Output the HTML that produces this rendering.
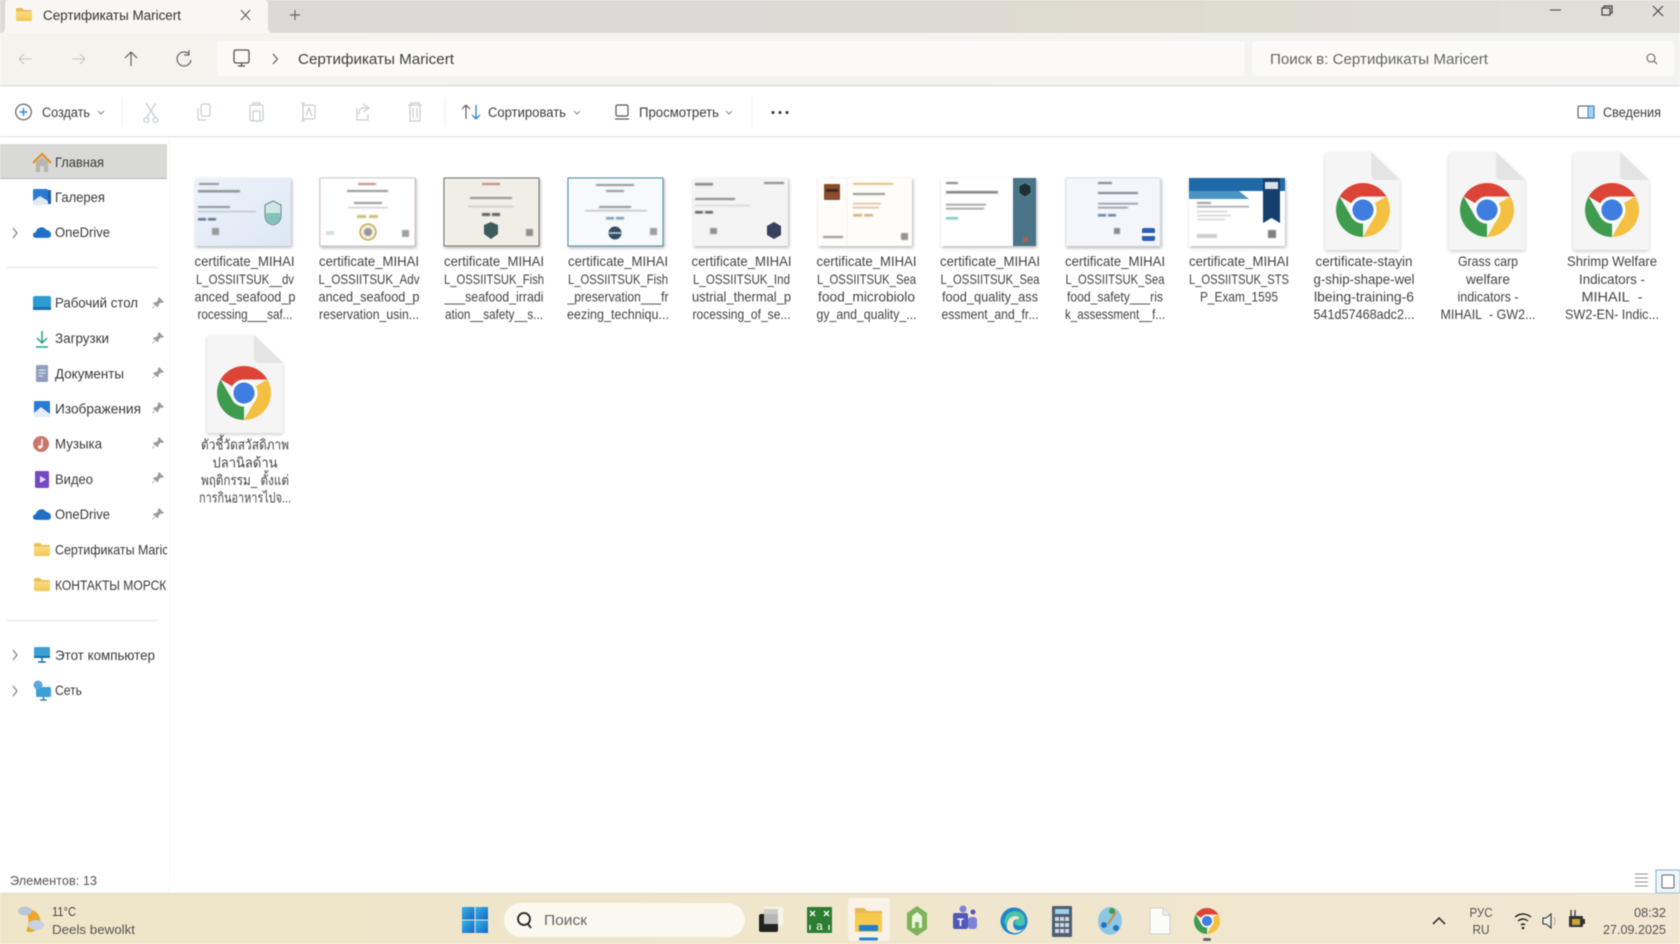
<!DOCTYPE html>
<html lang="ru"><head><meta charset="utf-8"><title>Сертификаты Maricert</title>
<style>
html,body{margin:0;padding:0;background:#fff;width:1680px;height:944px;overflow:hidden}
svg{display:block;filter:blur(.55px)}
svg svg{filter:none}
text{font-family:"Liberation Sans","Noto Sans CJK SC",sans-serif;fill:#3d3d3d;font-size:14px}
.n{font-size:14px;fill:#3a3a3a}
.f{font-size:14px;fill:#444;text-anchor:middle}
.t{font-size:13.5px;fill:#3c3c3c}
.s{font-size:13px;fill:#555}
</style></head><body>
<svg xmlns="http://www.w3.org/2000/svg" width="1680" height="944" viewBox="0 0 1680 944">
<defs>
<clipPath id="navclip"><rect x="0" y="535" width="167" height="70"/></clipPath>
<linearGradient id="tb" x1="0" x2="1"><stop offset="0" stop-color="#dddbd6"/><stop offset=".45" stop-color="#dcdad6"/><stop offset=".65" stop-color="#dfdbcf"/><stop offset="1" stop-color="#e1dfda"/></linearGradient>
<linearGradient id="ar" x1="0" x2="1"><stop offset="0" stop-color="#f5f3ee"/><stop offset="1" stop-color="#f3f3f1"/></linearGradient>
<linearGradient id="task" x1="0" x2="1"><stop offset="0" stop-color="#efe5c8"/><stop offset=".5" stop-color="#f0e6cc"/><stop offset="1" stop-color="#f2e7d2"/></linearGradient>
<linearGradient id="fold" x1="0" x2="0" y1="0" y2="1"><stop offset="0" stop-color="#f9dc86"/><stop offset="1" stop-color="#f4c64f"/></linearGradient>
<linearGradient id="win" x1="0" x2="1" y1="0" y2="1"><stop offset="0" stop-color="#36b3e8"/><stop offset="1" stop-color="#1667c4"/></linearGradient>
<linearGradient id="t1" x1="0" x2="1" y1="0" y2="1"><stop offset="0" stop-color="#eef3fb"/><stop offset="1" stop-color="#dde7f5"/></linearGradient>
<filter id="sh" x="-10%" y="-10%" width="125%" height="125%"><feDropShadow dx="1" dy="1.5" stdDeviation="1.5" flood-color="#000" flood-opacity=".3"/></filter>
<filter id="sh2" x="-10%" y="-10%" width="125%" height="125%"><feDropShadow dx="0" dy="1.5" stdDeviation="1.5" flood-color="#000" flood-opacity=".2"/></filter>
<filter id="bl"><feGaussianBlur stdDeviation=".6"/></filter>
<symbol id="chrome" viewBox="-28 -28 56 56" overflow="visible">
<path fill="#db4437" d="M0-27A27 27 0 0 1 23.4-13.5H0A13.5 13.5 0 0 0-11.7-6.75L-23.4-13.5A27 27 0 0 1 0-27Z"/>
<path fill="#f4c042" d="M0-27A27 27 0 0 1 23.4-13.5H0A13.5 13.5 0 0 0-11.7-6.75L-23.4-13.5A27 27 0 0 1 0-27Z" transform="rotate(120)"/>
<path fill="#3f9c4f" d="M0-27A27 27 0 0 1 23.4-13.5H0A13.5 13.5 0 0 0-11.7-6.75L-23.4-13.5A27 27 0 0 1 0-27Z" transform="rotate(240)"/>
<circle r="13.5" fill="#fff"/><circle r="10.6" fill="#3f7ee0"/>
</symbol>
<symbol id="fileic" viewBox="0 0 76 98" overflow="visible" preserveAspectRatio="none">
<path fill="#f5f5f5" d="M0 3Q0 0 3 0H47L76 28V95Q76 98 73 98H3Q0 98 0 95Z"/>
<path fill="#e4e4e4" d="M47 0V22Q47 28 53 28H76Z"/>
</symbol>
<symbol id="pin" viewBox="0 0 12 12" overflow="visible"><path fill="#9a9a9a" d="M7 0L12 5L10.6 5.8L8.6 5.6L6.5 7.7L6.4 9.6L5.4 10.4L3.5 8.3L.7 11.6L0 11L3 8.2L1 6.4L1.8 5.4L3.9 5.4L6 3.3L6 1.4Z"/></symbol>
<symbol id="cloud" viewBox="0 0 20 13" overflow="visible"><path fill="#1f6fc4" d="M4 13Q0 13 0 9.8Q0 7.3 3 6.8Q4 2.5 8 1.5Q12 .5 14.5 4Q20 5 20 9.5Q20 13 16 13Z"/></symbol>
<symbol id="folder" viewBox="0 0 16 13" overflow="visible"><path fill="#e9bd55" d="M0 1.5Q0 0 1.5 0H6L8 2H14.5Q16 2 16 3.5V5H0Z"/><path fill="url(#fold)" d="M0 3.5H16V11.5Q16 13 14.5 13H1.5Q0 13 0 11.5Z"/></symbol>
</defs>

<rect width="1680" height="944" fill="#fff"/>
<!-- title bar -->
<rect width="1680" height="33" fill="url(#tb)"/>
<path d="M0 33Q5 33 5 28V4Q5 0 9 0H264Q268 0 268 4V28Q268 33 273 33Z" fill="#f8f7f3"/>
<use href="#folder" x="16" y="8" width="16" height="13"/>
<text x="43" y="20" textLength="138" lengthAdjust="spacingAndGlyphs" class="t" style="fill:#333">Сертификаты Maricert</text>
<path d="M241 10L250 20M250 10L241 20" stroke="#555" stroke-width="1" fill="none"/>
<path d="M295 10V20M290 15H300" stroke="#666" stroke-width="1.2" fill="none"/>
<path d="M1550 10H1561" stroke="#555" stroke-width="1.2"/>
<path d="M1602 8H1610V15H1602ZM1604 8V6H1612V13H1610" stroke="#444" stroke-width="1.2" fill="none"/>
<path d="M1653 6L1663 16M1663 6L1653 16" stroke="#444" stroke-width="1.1" fill="none"/>

<!-- address row -->
<rect y="33" width="1680" height="53" fill="url(#ar)"/>
<rect y="85" width="1680" height="1.2" fill="#d8d8d6"/>
<path d="M19 59H32M19 59L24 54M19 59L24 64" stroke="#c4c4c2" fill="none" stroke-width="1.1"/>
<path d="M72 59H85M85 59L80 54M85 59L80 64" stroke="#c4c4c2" fill="none" stroke-width="1.1"/>
<path d="M131 66V52M131 52L125 58M131 52L137 58" stroke="#555" fill="none" stroke-width="1.1"/>
<path d="M189 54A7 7 0 1 0 191 60M189 50V55H184" stroke="#666" fill="none" stroke-width="1.2"/>
<rect x="217" y="41" width="1028" height="35" rx="3" fill="#fbfaf8"/>
<rect x="1252" y="41" width="422" height="35" rx="3" fill="#fbfaf8"/>
<path d="M234 52Q234 50 236 50H247Q249 50 249 52V61Q249 63 247 63H236Q234 63 234 61ZM238 66H245M241.500 63V66" stroke="#555" fill="none" stroke-width="1.3"/>
<path d="M273 54L277.500 59L273 64" stroke="#555" fill="none" stroke-width="1.1"/>
<text x="298" y="64" textLength="156" lengthAdjust="spacingAndGlyphs" style="font-size:15px;fill:#3f3f3f">Сертификаты Maricert</text>
<text x="1270" y="64" textLength="218" lengthAdjust="spacingAndGlyphs" style="font-size:15px;fill:#666">Поиск в: Сертификаты Maricert</text>
<circle cx="1651" cy="58" r="4" stroke="#666" fill="none" stroke-width="1.1"/><path d="M1654 61L1657 64" stroke="#666" stroke-width="1.1"/>

<!-- toolbar -->
<rect y="136" width="1680" height="1.2" fill="#e2e2e2"/>
<circle cx="23.500" cy="112" r="7.800" fill="none" stroke="#555" stroke-width="1.1"/><path d="M23.500 108V116M19.500 112H27.500" stroke="#1a73c8" stroke-width="1.2"/>
<text x="42" y="117" textLength="48" lengthAdjust="spacingAndGlyphs" class="t">Создать</text>
<path d="M98 111L101 114L104 111" stroke="#888" fill="none"/>
<path d="M122 97V127M445 97V127M752 97V127" stroke="#f0f0f0"/>
<g stroke="#c5ced6" fill="none" stroke-width="1.2">
<path d="M146 103L155 117M156 103L147 117"/><circle cx="146.500" cy="120" r="2.500"/><circle cx="155.500" cy="120" r="2.500"/>
<rect x="201" y="104" width="9" height="12" rx="2"/><path d="M198 108V118Q198 120 200 120H206"/>
<rect x="250" y="105" width="13" height="16" rx="2"/><rect x="253" y="111" width="7" height="10" rx="1"/><path d="M253 105V103H260V105"/>
<rect x="303" y="105" width="12" height="14" rx="2"/><path d="M306 116L309 108L312 116M301 103H305M303 103V121M301 121H305"/>
<path d="M357 108V120H368V114M363 104L369 108L363 112M369 108H363Q359 108 359 114"/>
<path d="M408 105H422M411 105V103H419V105M410 105V121H420V105M413 108V118M417 108V118"/>
</g>
<path d="M466 119V105M466 105L462 109M466 105L470 109" stroke="#555" fill="none" stroke-width="1.1"/>
<path d="M476 105V119M476 119L472 115M476 119L480 115" stroke="#1a73c8" fill="none" stroke-width="1.2"/>
<text x="488" y="117" textLength="78" lengthAdjust="spacingAndGlyphs" class="t">Сортировать</text>
<path d="M574 111L577 114L580 111" stroke="#888" fill="none"/>
<rect x="616" y="105" width="12" height="11" rx="1.500" stroke="#555" fill="none" stroke-width="1.2"/><path d="M615 119H629" stroke="#555" stroke-width="1.2"/>
<text x="639" y="117" textLength="80" lengthAdjust="spacingAndGlyphs" class="t">Просмотреть</text>
<path d="M726 111L729 114L732 111" stroke="#888" fill="none"/>
<circle cx="773" cy="112.500" r="1.500" fill="#333"/><circle cx="780" cy="112.500" r="1.500" fill="#333"/><circle cx="787" cy="112.500" r="1.500" fill="#333"/>
<rect x="1578" y="106" width="16" height="12" rx="1.500" stroke="#555" fill="none" stroke-width="1.1"/><rect x="1588" y="106" width="6" height="12" fill="#a9d0ee" stroke="#1a73c8" stroke-width=".8"/>
<text x="1603" y="117" textLength="58" lengthAdjust="spacingAndGlyphs" class="t">Сведения</text>

<!-- sidebar -->
<rect x="169" y="137" width="1" height="757" fill="#f5f5f5"/>
<rect x="0" y="144" width="167" height="35" fill="#d9d9d8"/>
<rect x="0" y="178" width="167" height="1" fill="#b5b5b5"/>
<path d="M36 172V162L42 157L48 162V172H44V166H40V172Z" fill="#b8b5ae"/><path d="M33 163L42 154L51 163" stroke="#e08c2a" stroke-width="2.200" fill="none"/>
<text class="n" x="55" y="167" textLength="49" lengthAdjust="spacingAndGlyphs">Главная</text>
<rect x="33" y="189" width="15" height="16" rx="1.500" fill="#2a7bd2"/><rect x="48" y="190" width="3" height="14" fill="#1e5fa8"/><path d="M33 205V201L40 196L48 201V205Z" fill="#dfeaf5"/>
<text class="n" x="55" y="202" textLength="50" lengthAdjust="spacingAndGlyphs">Галерея</text>
<path d="M13 228L17 233L13 238" stroke="#777" fill="none" stroke-width="1.1"/>
<use href="#cloud" x="33" y="226" width="18" height="12"/>
<text class="n" x="55" y="237" textLength="55" lengthAdjust="spacingAndGlyphs">OneDrive</text>
<rect x="7" y="267" width="151" height="1" fill="#e4e4e4"/>

<rect x="33" y="296" width="18" height="14" rx="2" fill="#2f9ad0"/><rect x="33" y="307" width="18" height="3" fill="#1b6ea8"/>
<text class="n" x="55" y="307.500" textLength="83" lengthAdjust="spacingAndGlyphs">Рабочий стол</text>
<use href="#pin" x="152" y="297" width="12" height="12"/>
<path d="M42 331V343M37 338L42 343L47 338M36 347H48" stroke="#27a184" stroke-width="1.500" fill="none"/>
<text class="n" x="55" y="343" textLength="54" lengthAdjust="spacingAndGlyphs">Загрузки</text>
<use href="#pin" x="152" y="332" width="12" height="12"/>
<rect x="36" y="365" width="12" height="17" rx="1" fill="#8ea0bd"/><path d="M38.500 370H45.500M38.500 373H45.500M38.500 376H43" stroke="#e8edf4"/>
<text class="n" x="55" y="378.500" textLength="69" lengthAdjust="spacingAndGlyphs">Документы</text>
<use href="#pin" x="152" y="367" width="12" height="12"/>
<rect x="34" y="401" width="16" height="16" rx="1.500" fill="#2a7bd2"/><path d="M34 417V413L41 407L50 414V417Z" fill="#e6eef7"/>
<text class="n" x="55" y="413.500" textLength="86" lengthAdjust="spacingAndGlyphs">Изображения</text>
<use href="#pin" x="152" y="402" width="12" height="12"/>
<circle cx="41" cy="444" r="8" fill="#c9776a"/><path d="M42 439V447" stroke="#fff" stroke-width="1.400"/><circle cx="40" cy="447" r="1.800" fill="#fff"/>
<text class="n" x="55" y="448.500" textLength="47" lengthAdjust="spacingAndGlyphs">Музыка</text>
<use href="#pin" x="152" y="437" width="12" height="12"/>
<rect x="35" y="471" width="14" height="17" rx="1.500" fill="#7549c4"/><path d="M40 476L46 479.500L40 483Z" fill="#e9e0fa"/>
<text class="n" x="55" y="484" textLength="38" lengthAdjust="spacingAndGlyphs">Видео</text>
<use href="#pin" x="152" y="472" width="12" height="12"/>
<use href="#cloud" x="33" y="508" width="18" height="12"/>
<text class="n" x="55" y="519" textLength="55" lengthAdjust="spacingAndGlyphs">OneDrive</text>
<use href="#pin" x="152" y="508" width="12" height="12"/>
<use href="#folder" x="34" y="543" width="16" height="13"/>
<g clip-path="url(#navclip)">
<text class="n" x="55" y="554.500" textLength="128" lengthAdjust="spacingAndGlyphs">Сертификаты Maricert</text>
<text class="n" x="55" y="590" textLength="128" lengthAdjust="spacingAndGlyphs">КОНТАКТЫ МОРСКИЕ</text>
</g>
<use href="#folder" x="34" y="578" width="16" height="13"/>
<rect x="7" y="620" width="151" height="1" fill="#e4e4e4"/>
<path d="M13 650L17 655L13 660" stroke="#777" fill="none" stroke-width="1.1"/>
<rect x="34" y="647" width="16" height="11" rx="1.500" fill="#3b9fd6"/><rect x="34" y="656" width="16" height="2" fill="#1e6ea6"/><path d="M38 662H46M42 658V662" stroke="#2a6f9c" stroke-width="1.500"/>
<text class="n" x="55" y="660" textLength="100" lengthAdjust="spacingAndGlyphs">Этот компьютер</text>
<path d="M13 686L17 691L13 696" stroke="#777" fill="none" stroke-width="1.1"/>
<rect x="36" y="687" width="15" height="10" rx="1.500" fill="#3b9fd6"/><path d="M40 700H47M43.500 697V700" stroke="#2a6f9c" stroke-width="1.300"/><circle cx="38" cy="685" r="4.500" fill="#5aa8d8"/>
<text class="n" x="55" y="695" textLength="27" lengthAdjust="spacingAndGlyphs">Сеть</text>

<!-- thumbnails -->
<g transform="translate(195 178)">
<rect width="96" height="68" fill="url(#t1)" filter="url(#sh)"/>
<g filter="url(#bl)" fill="#667" opacity=".7">
<rect x="4" y="5" width="20" height="2"/><rect x="3" y="12" width="42" height="2.500"/><rect x="3" y="28" width="32" height="2"/><rect x="3" y="33" width="58" height="1.200" fill="#9aa"/>
<rect x="3" y="40" width="8" height="2.500" fill="#1f3a5c"/><rect x="13" y="40" width="8" height="2.500" fill="#1f3a5c"/><rect x="17" y="50" width="7" height="7" fill="#777"/></g>
<path d="M70 27L78 23L86 27V37Q86 45 78 47Q70 45 70 37Z" fill="#cfe8e4" stroke="#6e8c94" stroke-width="1.100"/><path d="M71 35H85V38Q85 44 78 46Q71 44 71 38Z" fill="#7fc3bb"/>
</g>
<g transform="translate(320 178)">
<rect width="95" height="68" fill="#fff" stroke="#c8bcb5" stroke-width=".8" filter="url(#sh)"/>
<g filter="url(#bl)" fill="#666" opacity=".7">
<rect x="38" y="5" width="18" height="2" fill="#a54"/><rect x="27" y="12" width="41" height="2"/><rect x="34" y="24" width="28" height="2"/><rect x="28" y="29" width="40" height="1.200" fill="#aaa"/>
<rect x="37" y="37" width="9" height="3" fill="#b8a13c"/><rect x="49" y="37" width="9" height="3" fill="#b8a13c"/><rect x="82" y="52" width="7" height="7" fill="#777"/><rect x="6" y="53" width="8" height="4" fill="#ccc"/></g>
<circle cx="48" cy="54" r="8" fill="#eeeadb" stroke="#b8a13c" stroke-width="1.300"/><circle cx="48" cy="54" r="4" fill="#999"/>
</g>
<g transform="translate(444 178)">
<rect width="95" height="68" fill="#f1eee8" stroke="#666" stroke-width=".9" filter="url(#sh)"/>
<g filter="url(#bl)" fill="#666" opacity=".7">
<rect x="38" y="5" width="18" height="2" fill="#a54"/><rect x="26" y="19" width="42" height="2"/><rect x="24" y="28" width="46" height="1.200" fill="#aaa"/>
<rect x="38" y="35" width="8" height="3" fill="#222"/><rect x="48" y="35" width="8" height="3" fill="#222"/><rect x="82" y="51" width="7" height="7" fill="#666"/></g>
<path d="M40 47L47 44L54 47V56L47 61L40 56Z" fill="#3d5d5d"/>
</g>
<g transform="translate(568 178)">
<rect width="95" height="68" fill="#f7f9fa" stroke="#4d8da2" stroke-width="1" filter="url(#sh)"/>
<g filter="url(#bl)" fill="#667" opacity=".7">
<rect x="28" y="6" width="38" height="2"/><rect x="38" y="12" width="18" height="2"/><rect x="31" y="28" width="32" height="2"/><rect x="17" y="32" width="62" height="1.200" fill="#999"/>
<rect x="38" y="39" width="8" height="2.500" fill="#3d7d92"/><rect x="48" y="39" width="8" height="2.500" fill="#3d7d92"/><rect x="82" y="50" width="7" height="7" fill="#777"/></g>
<circle cx="47" cy="55" r="6.500" fill="#334e66"/><rect x="41" y="54" width="12" height="2" fill="#9dbbc8"/>
</g>
<g transform="translate(693 178)">
<rect width="95" height="68" fill="#f3f4f3" filter="url(#sh)"/>
<g filter="url(#bl)" fill="#555" opacity=".7">
<rect x="2" y="5" width="18" height="2.500"/><rect x="71" y="4" width="20" height="2"/><rect x="2" y="20" width="40" height="2"/><rect x="2" y="27" width="55" height="1.200" fill="#bbb"/>
<rect x="2" y="33" width="8" height="2.500" fill="#222"/><rect x="12" y="33" width="8" height="2.500" fill="#222"/><rect x="17" y="50" width="7" height="6" fill="#666"/></g>
<path d="M74 48L81 44L88 48V57L81 61L74 57Z" fill="#37415f"/>
</g>
<g transform="translate(818 178)">
<rect width="94" height="68" fill="#fffdf9" filter="url(#sh)"/>
<rect x="6" y="6" width="16" height="16" rx="1" fill="#8a4c2b"/><rect x="8" y="11" width="12" height="3" fill="#3f2a1e"/>
<path d="M29 0V68" stroke="#f3f0ea"/>
<g filter="url(#bl)" fill="#666" opacity=".7">
<rect x="35" y="5" width="40" height="1.800" fill="#d8943a"/><rect x="35" y="15" width="32" height="2"/><rect x="35" y="25" width="28" height="1.200" fill="#c08040"/><rect x="35" y="29" width="26" height="1.200" fill="#c08040"/>
<rect x="35" y="36" width="9" height="2.500" fill="#d08a3a"/><rect x="46" y="36" width="9" height="2.500" fill="#d08a3a"/><rect x="5" y="58" width="20" height="2"/><rect x="83" y="55" width="7" height="7" fill="#666"/></g>
</g>
<g transform="translate(941 178)">
<rect width="95" height="68" fill="#fff" filter="url(#sh)"/>
<rect x="72" y="0" width="23" height="68" fill="#4a7488"/>
<path d="M78 8L84 5L90 8V15L84 19L78 15Z" fill="#222d36" stroke="#6fb" stroke-width=".3"/>
<g filter="url(#bl)" fill="#555" opacity=".75">
<rect x="5" y="4" width="12" height="2"/><rect x="5" y="13" width="52" height="2.500"/><rect x="5" y="26" width="40" height="1.300"/><rect x="5" y="30" width="38" height="1.300"/><rect x="5" y="39" width="12" height="2.500" fill="#4fb3a8"/></g>
<rect x="82" y="59" width="5" height="5" fill="#b06050"/>
</g>
<g transform="translate(1066 178)">
<rect width="94" height="68" fill="#f4f6fb" stroke="#dde2ee" filter="url(#sh)"/>
<g filter="url(#bl)" fill="#556" opacity=".75">
<rect x="32" y="4" width="14" height="2"/><rect x="32" y="14" width="40" height="2"/><rect x="32" y="25" width="40" height="1.300"/><rect x="32" y="29" width="30" height="1.300"/>
<rect x="32" y="36" width="8" height="2.500" fill="#33569a"/><rect x="42" y="36" width="8" height="2.500" fill="#33569a"/><rect x="48" y="50" width="6" height="6" fill="#666"/></g>
<rect x="76" y="50" width="13" height="13" rx="2" fill="#2f5db5"/><rect x="76" y="55" width="13" height="3" fill="#fff"/>
</g>
<g transform="translate(1189 178)">
<rect width="96" height="68" fill="#fff" filter="url(#sh)"/>
<rect width="96" height="13" fill="#1e6aa8"/><path d="M0 13H50L60 21H0Z" fill="#4a94c4"/>
<path d="M74 0H91V45L82.500 40L74 45Z" fill="#173f6e"/><rect x="76" y="4" width="13" height="7" fill="#fff" opacity=".85"/>
<g filter="url(#bl)" fill="#667" opacity=".75"><rect x="8" y="24" width="14" height="1.800"/><rect x="8" y="28" width="52" height="1.300"/><rect x="8" y="33" width="30" height="1.100" fill="#aaa"/><rect x="8" y="37" width="34" height="1.100" fill="#aaa"/><rect x="8" y="41" width="28" height="1.100" fill="#aaa"/><rect x="79" y="52" width="8" height="8" fill="#555"/><rect x="8" y="56" width="20" height="4" fill="#bbb"/></g>
</g>

<!-- chrome files -->
<g filter="url(#sh2)"><use href="#fileic" x="1325" y="152" width="75" height="98"/><use href="#fileic" x="1449" y="152" width="76" height="98"/><use href="#fileic" x="1573" y="152" width="76" height="98"/><use href="#fileic" x="207" y="335" width="76" height="98"/></g>
<use href="#chrome" x="1335" y="182" width="56" height="56"/>
<use href="#chrome" x="1459" y="182" width="56" height="56"/>
<use href="#chrome" x="1584" y="182" width="56" height="56"/>
<use href="#chrome" x="216" y="365" width="56" height="56"/>

<!-- labels -->
<g>
<text class="f" x="244.500" y="266" textLength="100" lengthAdjust="spacingAndGlyphs">certificate_MIHAI</text>
<text class="f" x="245" y="284" textLength="98" lengthAdjust="spacingAndGlyphs">L_OSSIITSUK__dv</text>
<text class="f" x="245" y="301.500" textLength="101" lengthAdjust="spacingAndGlyphs">anced_seafood_p</text>
<text class="f" x="245" y="319" textLength="95" lengthAdjust="spacingAndGlyphs">rocessing___saf...</text>
<text class="f" x="369" y="266" textLength="100" lengthAdjust="spacingAndGlyphs">certificate_MIHAI</text>
<text class="f" x="369" y="284" textLength="101" lengthAdjust="spacingAndGlyphs">L_OSSIITSUK_Adv</text>
<text class="f" x="369" y="301.500" textLength="101" lengthAdjust="spacingAndGlyphs">anced_seafood_p</text>
<text class="f" x="369" y="319" textLength="100" lengthAdjust="spacingAndGlyphs">reservation_usin...</text>
<text class="f" x="494" y="266" textLength="100" lengthAdjust="spacingAndGlyphs">certificate_MIHAI</text>
<text class="f" x="494" y="284" textLength="100" lengthAdjust="spacingAndGlyphs">L_OSSIITSUK_Fish</text>
<text class="f" x="494" y="301.500" textLength="99" lengthAdjust="spacingAndGlyphs">___seafood_irradi</text>
<text class="f" x="494" y="319" textLength="98" lengthAdjust="spacingAndGlyphs">ation__safety__s...</text>
<text class="f" x="618" y="266" textLength="100" lengthAdjust="spacingAndGlyphs">certificate_MIHAI</text>
<text class="f" x="618" y="284" textLength="100" lengthAdjust="spacingAndGlyphs">L_OSSIITSUK_Fish</text>
<text class="f" x="618" y="301.500" textLength="101" lengthAdjust="spacingAndGlyphs">_preservation___fr</text>
<text class="f" x="618" y="319" textLength="102" lengthAdjust="spacingAndGlyphs">eezing_techniqu...</text>
<text class="f" x="741.500" y="266" textLength="100" lengthAdjust="spacingAndGlyphs">certificate_MIHAI</text>
<text class="f" x="741.500" y="284" textLength="97" lengthAdjust="spacingAndGlyphs">L_OSSIITSUK_Ind</text>
<text class="f" x="741.500" y="301.500" textLength="99" lengthAdjust="spacingAndGlyphs">ustrial_thermal_p</text>
<text class="f" x="741.500" y="319" textLength="98" lengthAdjust="spacingAndGlyphs">rocessing_of_se...</text>
<text class="f" x="866.500" y="266" textLength="100" lengthAdjust="spacingAndGlyphs">certificate_MIHAI</text>
<text class="f" x="866.500" y="284" textLength="99" lengthAdjust="spacingAndGlyphs">L_OSSIITSUK_Sea</text>
<text class="f" x="866.500" y="301.500" textLength="97" lengthAdjust="spacingAndGlyphs">food_microbiolo</text>
<text class="f" x="866.500" y="319" textLength="100" lengthAdjust="spacingAndGlyphs">gy_and_quality_...</text>
<text class="f" x="990" y="266" textLength="100" lengthAdjust="spacingAndGlyphs">certificate_MIHAI</text>
<text class="f" x="990" y="284" textLength="99" lengthAdjust="spacingAndGlyphs">L_OSSIITSUK_Sea</text>
<text class="f" x="990" y="301.500" textLength="96" lengthAdjust="spacingAndGlyphs">food_quality_ass</text>
<text class="f" x="990" y="319" textLength="97" lengthAdjust="spacingAndGlyphs">essment_and_fr...</text>
<text class="f" x="1115" y="266" textLength="100" lengthAdjust="spacingAndGlyphs">certificate_MIHAI</text>
<text class="f" x="1115" y="284" textLength="99" lengthAdjust="spacingAndGlyphs">L_OSSIITSUK_Sea</text>
<text class="f" x="1115" y="301.500" textLength="96" lengthAdjust="spacingAndGlyphs">food_safety___ris</text>
<text class="f" x="1115" y="319" textLength="100" lengthAdjust="spacingAndGlyphs">k_assessment__f...</text>
<text class="f" x="1239" y="266" textLength="100" lengthAdjust="spacingAndGlyphs">certificate_MIHAI</text>
<text class="f" x="1239" y="284" textLength="100" lengthAdjust="spacingAndGlyphs">L_OSSIITSUK_STS</text>
<text class="f" x="1239" y="301.500" textLength="78" lengthAdjust="spacingAndGlyphs">P_Exam_1595</text>
<text class="f" x="1364" y="266" textLength="97" lengthAdjust="spacingAndGlyphs">certificate-stayin</text>
<text class="f" x="1364" y="284" textLength="101" lengthAdjust="spacingAndGlyphs">g-ship-shape-wel</text>
<text class="f" x="1364" y="301.500" textLength="100" lengthAdjust="spacingAndGlyphs">lbeing-training-6</text>
<text class="f" x="1364" y="319" textLength="101" lengthAdjust="spacingAndGlyphs">541d57468adc2...</text>
<text class="f" x="1488" y="266" textLength="60" lengthAdjust="spacingAndGlyphs">Grass carp</text>
<text class="f" x="1488" y="284" textLength="44" lengthAdjust="spacingAndGlyphs">welfare</text>
<text class="f" x="1488" y="301.500" textLength="61" lengthAdjust="spacingAndGlyphs">indicators -</text>
<text class="f" x="1488" y="319" textLength="95" lengthAdjust="spacingAndGlyphs">MIHAIL&#160;&#160;- GW2...</text>
<text class="f" x="1612" y="266" textLength="90" lengthAdjust="spacingAndGlyphs">Shrimp Welfare</text>
<text class="f" x="1612" y="284" textLength="66" lengthAdjust="spacingAndGlyphs">Indicators -</text>
<text class="f" x="1612" y="301.500" textLength="61" lengthAdjust="spacingAndGlyphs">MIHAIL&#160;&#160;-</text>
<text class="f" x="1612" y="319" textLength="94" lengthAdjust="spacingAndGlyphs">SW2-EN- Indic...</text>
<text class="f" x="245" y="449.500" textLength="88" lengthAdjust="spacingAndGlyphs">ตัวชี้วัดสวัสดิภาพ</text>
<text class="f" x="245" y="467.500" textLength="65" lengthAdjust="spacingAndGlyphs">ปลานิลด้าน</text>
<text class="f" x="245" y="485" textLength="88" lengthAdjust="spacingAndGlyphs">พฤติกรรม_ ตั้งแต่</text>
<text class="f" x="245" y="502.500" textLength="92" lengthAdjust="spacingAndGlyphs">การกินอาหารไปจ...</text>
</g>

<!-- status bar -->
<text x="10" y="885" textLength="87" lengthAdjust="spacingAndGlyphs" class="s">Элементов: 13</text>
<path d="M1635 874H1648M1635 878H1648M1635 882H1648M1635 886H1648" stroke="#8f8f8f" stroke-width="1"/>
<rect x="1656" y="870" width="24" height="23" fill="#eef5fb" stroke="#7fb0d8"/>
<rect x="1662" y="875" width="12" height="13" rx="1" fill="#fff" stroke="#666"/>

<!-- taskbar -->
<rect y="894" width="1680" height="50" fill="url(#task)"/>
<rect y="893" width="1680" height="1" fill="#d9d6c8"/>
<path d="M31 911A10 11 0 1 1 31 931Q36 921 31 911Z" fill="#eda52a" transform="translate(-5 0)"/>
<ellipse cx="25" cy="911" rx="7" ry="4.500" fill="#b9c6d9"/><ellipse cx="36" cy="925" rx="8" ry="5" fill="#c6d2e2"/>
<text x="52" y="916" textLength="24" lengthAdjust="spacingAndGlyphs" class="s" style="fill:#444">11°C</text>
<text x="52" y="934" textLength="83" lengthAdjust="spacingAndGlyphs" class="s">Deels bewolkt</text>
<rect x="462" y="907" width="12.500" height="12.500" fill="url(#win)"/><rect x="475.500" y="907" width="12.500" height="12.500" fill="url(#win)"/><rect x="462" y="920.500" width="12.500" height="12.500" fill="url(#win)"/><rect x="475.500" y="920.500" width="12.500" height="12.500" fill="url(#win)"/>
<rect x="504" y="903" width="241" height="34" rx="17" fill="#fbf8ef"/>
<circle cx="524" cy="919" r="6" stroke="#222" fill="none" stroke-width="1.800"/><path d="M528 924L531 928" stroke="#222" stroke-width="1.800"/>
<text x="544" y="925" textLength="43" lengthAdjust="spacingAndGlyphs" style="font-size:15px;fill:#666">Поиск</text>
<rect x="764" y="907" width="19" height="19" rx="2" fill="#f6f4ec"/><rect x="759" y="914" width="19" height="18" rx="2" fill="#222"/><rect x="764" y="909" width="14" height="15" fill="#c8c8c6" opacity=".9"/>
<rect x="807" y="907" width="25" height="26" rx="1" fill="#2c7d32"/>
<text x="819.500" y="930" text-anchor="middle" style="font-size:12px;fill:#fff">а</text>
<path d="M810 911L815 916M815 911L810 916M824 911L829 916M829 911L824 916M810 925V930M829 925V930" stroke="#fff" stroke-width="1.300"/>

<rect x="848" y="898" width="42" height="43" rx="3" fill="#f8f3e6"/>
<path d="M855 908H864L867 911H882V915H855Z" fill="#e7b94f"/><rect x="855" y="913" width="27" height="19" rx="1" fill="#f6c94f"/><rect x="859" y="925" width="19" height="6" rx="1" fill="#1f7fd0"/>
<rect x="859" y="937.500" width="19" height="3" rx="1.500" fill="#2a7fd4"/>

<path d="M917 906L927 913V929L917 936L907 929V913Z" fill="#7fb35a"/><path d="M917 912L922 916V928H912V916Z" fill="#eef5df"/><rect x="915" y="922" width="4" height="6" fill="#7fb35a"/>
<rect x="953" y="913" width="15" height="16" rx="2" fill="#5058b6"/><rect x="968" y="917" width="9" height="12" rx="3" fill="#7b83d8"/><circle cx="963" cy="909" r="3.500" fill="#7b83d8"/><circle cx="973" cy="912" r="2.500" fill="#5058b6"/>
<text x="960.500" y="926" text-anchor="middle" style="font-size:11px;fill:#fff;font-weight:bold">T</text>
<circle cx="1014" cy="921" r="13.500" fill="#1e86c8"/><path d="M1004 922Q1006 911 1016 911Q1025 912 1025 922Q1025 926 1019 926Q1012 924 1016 920Q1011 918 1006 926Z" fill="#49c3a9"/><path d="M1007 925Q1008 917 1015 916Q1019 916 1019 919Q1011 919 1014 928Q1017 932 1024 929Q1016 936 1009 931Q1006 929 1007 925Z" fill="#f0e6cc"/>
<rect x="1052" y="906" width="20" height="31" rx="1" fill="#4d5f72"/><rect x="1055" y="909" width="14" height="5" fill="#9fd0ea"/>
<g fill="#cfd6de"><rect x="1055" y="917" width="4" height="4"/><rect x="1060" y="917" width="4" height="4"/><rect x="1065" y="917" width="4" height="4"/><rect x="1055" y="923" width="4" height="4"/><rect x="1060" y="923" width="4" height="4"/><rect x="1065" y="923" width="4" height="4"/><rect x="1055" y="929" width="4" height="4"/><rect x="1060" y="929" width="4" height="4"/><rect x="1065" y="929" width="4" height="4"/></g>
<ellipse cx="1110" cy="921" rx="12" ry="14" fill="#8cc7e6"/><circle cx="1104" cy="925" r="3" fill="#2277b8"/><circle cx="1112" cy="911" r="3" fill="#3f9c4f"/><circle cx="1116" cy="928" r="3" fill="#2277b8"/><path d="M1116 912L1108 924" stroke="#d08a3a" stroke-width="2"/>
<path d="M1150 908H1163L1170 915V934H1150Z" fill="#fbfbfa" stroke="#cfcfc9"/><path d="M1163 908V915H1170" fill="#eee" stroke="#cfcfc9"/>
<use href="#chrome" x="1193.500" y="907.500" width="27" height="27"/>
<rect x="1203" y="938" width="8" height="3" rx="1.500" fill="#666"/>

<path d="M1433 924L1439 918L1445 924" stroke="#222" fill="none" stroke-width="1.500"/>
<text x="1481" y="917" text-anchor="middle" textLength="23" lengthAdjust="spacingAndGlyphs" class="s">РУС</text>
<text x="1481" y="934" text-anchor="middle" textLength="17" lengthAdjust="spacingAndGlyphs" class="s">RU</text>
<path d="M1515 917Q1523 911 1531 917M1518 921Q1523 917 1528 921M1521 925Q1523 923 1525 925" stroke="#222" fill="none" stroke-width="1.400"/><circle cx="1523" cy="928" r="1.300" fill="#222"/>
<path d="M1543 918H1546L1551 914V928L1546 924H1543Z" stroke="#333" fill="#eee" stroke-width="1.100"/><path d="M1554 917Q1556 921 1554 925" stroke="#aaa" fill="none"/>
<rect x="1569" y="916" width="14" height="11" rx="1" fill="#333"/><rect x="1583" y="919" width="2" height="5" fill="#333"/><path d="M1571 910V916M1575 910V916" stroke="#333" stroke-width="1.300"/><rect x="1572" y="919" width="8" height="6" fill="#c9a63c"/>
<text x="1666" y="917" text-anchor="end" textLength="32" lengthAdjust="spacingAndGlyphs" class="s">08:32</text>
<text x="1666" y="934" text-anchor="end" textLength="63" lengthAdjust="spacingAndGlyphs" class="s">27.09.2025</text>
</svg>
</body></html>
